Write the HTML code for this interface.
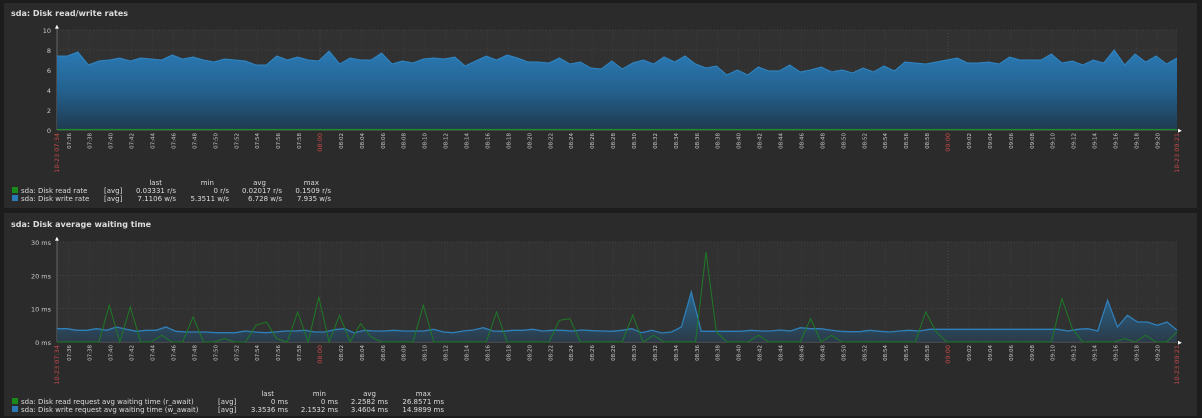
<!DOCTYPE html>
<html><head><meta charset="utf-8"><style>
html,body{margin:0;padding:0;background:#1c1c1c;width:1202px;height:418px;overflow:hidden;font-family:"DejaVu Sans","Liberation Sans",sans-serif;}
.p{position:absolute;left:4px;width:1193px;background:#2b2b2b;}
svg{position:absolute;left:0;top:0;}
</style></head><body>
<div class="p" style="top:3px;height:205px"></div>
<div class="p" style="top:213px;height:203px"></div>
<svg id="s" width="1202" height="418" xmlns="http://www.w3.org/2000/svg" font-family="DejaVu Sans, Liberation Sans, sans-serif">
<defs>
<linearGradient id="g1" x1="0" y1="0" x2="0" y2="1"><stop offset="0" stop-color="#2a7ab5"/><stop offset="0.5" stop-color="#24628f"/><stop offset="1" stop-color="#1f3a4f"/></linearGradient>
<linearGradient id="g2" x1="0" y1="0" x2="0" y2="1"><stop offset="0" stop-color="#2a6f9e"/><stop offset="1" stop-color="#2a3d4d"/></linearGradient>
</defs>
<text x="11" y="16" font-size="8" font-weight="bold" fill="#ddd">sda: Disk read/write rates</text>
<text x="11" y="227" font-size="8" font-weight="bold" fill="#ddd">sda: Disk average waiting time</text>
</svg>
<script>
var s=document.getElementById('s'),NS='http://www.w3.org/2000/svg';
function el(t,a,txt){var e=document.createElementNS(NS,t);for(var k in a)e.setAttribute(k,a[k]);if(txt!=null)e.textContent=txt;s.appendChild(e);return e;}
var X0=57,X1=1177;
function tx(m){return 320+(m-480)*10.467;}
function plot(top,bot,ylabels){
 el('rect',{x:X0,y:top,width:X1-X0,height:bot-top,fill:'#313131'});
 for(var i=0;i<ylabels.length;i++){var y=top+(bot-top)*i/(ylabels.length-1);
  if(i<ylabels.length-1)el('line',{x1:X0,x2:X1,y1:y,y2:y,stroke:'#444','stroke-dasharray':'1,2'});
  el('text',{x:51,y:y+3,'font-size':'6.5',fill:'#ccc','text-anchor':'end'},ylabels[ylabels.length-1-i]);}
 for(var m=456;m<=560;m+=2){var x=tx(m);
  el('line',{x1:x,x2:x,y1:top,y2:bot,stroke:(m%60==0)?'#4a4a4a':'#3d3d3d','stroke-dasharray':'1,2'});
  var h=Math.floor(m/60),mi=m%60,lab=(h<10?'0':'')+h+':'+(mi<10?'0':'')+mi;
  var red=(mi==0);
  el('text',{x:0,y:0,'font-size':red?'6.5':'5.5',fill:red?'#c04848':'#ccc','text-anchor':'end',transform:'translate('+(x+2)+','+(bot+3)+') rotate(-90)'},lab);}
 el('text',{x:0,y:0,'font-size':'6.5',fill:'#c04848','text-anchor':'end',transform:'translate('+(X0+2)+','+(bot+3)+') rotate(-90)'},'10-23 07:34');
 el('text',{x:0,y:0,'font-size':'6.5',fill:'#c04848','text-anchor':'end',transform:'translate('+(X1+2)+','+(bot+3)+') rotate(-90)'},'10-23 09:21');
 el('line',{x1:X0,x2:X1,y1:bot,y2:bot,stroke:'#666'});
 el('line',{x1:X0,x2:X0,y1:top-3,y2:bot,stroke:'#666'});
 el('text',{x:X0-2,y:top-2,'font-size':'5',fill:'#fff'},'▲');
 el('text',{x:X1+1,y:bot+2,'font-size':'5',fill:'#fff'},'▶');
}
function pts(vals,top,bot,max){var n=vals.length,r=[];for(var i=0;i<n;i++){r.push((X0+(X1-X0)*i/(n-1)).toFixed(1)+','+(bot-(bot-top)*vals[i]/max).toFixed(1));}return r;}
plot(30,130,['0','2','4','6','8','10']);
var w=[7.4,7.4,7.8,6.5,6.9,7.0,7.2,6.9,7.2,7.1,7.0,7.5,7.1,7.3,7.0,6.8,7.1,7.0,6.9,6.5,6.5,7.4,7.0,7.3,7.0,6.9,7.9,6.6,7.2,7.0,7.0,7.7,6.6,6.9,6.7,7.1,7.2,7.1,7.3,6.4,6.9,7.4,7.0,7.5,7.2,6.8,6.8,6.7,7.2,6.6,6.8,6.2,6.1,6.9,6.1,6.7,7.0,6.6,7.3,6.8,7.4,6.6,6.2,6.4,5.5,6.0,5.5,6.3,5.9,5.9,6.5,5.8,6.0,6.3,5.8,6.0,5.7,6.2,5.8,6.4,5.9,6.8,6.7,6.6,6.8,7.0,7.2,6.7,6.7,6.8,6.6,7.3,7.0,7.0,7.0,7.6,6.7,6.9,6.5,7.0,6.7,8.0,6.5,7.6,6.8,7.4,6.6,7.2];
var p=pts(w,30,130,10);
el('polygon',{points:X0+',130 '+p.join(' ')+' '+X1+',130',fill:'url(#g1)'});
el('polyline',{points:p.join(' '),fill:'none',stroke:'#2f86c4','stroke-width':'1'});
el('line',{x1:X0,x2:X1,y1:129.5,y2:129.5,stroke:'#1f8a2a','stroke-width':'1.2'});
plot(242,342,['0 ms','10 ms','20 ms','30 ms']);
var bw=[4,4,3.5,3.5,4,3.5,4.5,3.8,3.2,3.5,3.5,4.5,3.2,3,3,3,2.8,2.8,2.8,3.3,3,2.8,3,3.3,3.3,3.5,3,3,3.7,4,2.7,3.5,3.3,3.3,3.5,3.3,3.3,3.3,3.8,3,2.8,3.3,3.6,4.3,3.3,3.2,3.5,3.5,3.8,3.3,3.5,3.5,3.3,3.6,3.4,3.3,3.2,3.5,4,2.8,3.5,2.7,3,4.5,15,3.2,3.2,3.2,3.2,3.2,3.5,3.3,3.3,3.6,3.3,4.3,4,4,3.6,3.2,3.1,3.1,3.5,3.2,3.0,3.3,3.5,3.3,3.8,3.8,3.8,3.8,3.8,3.8,3.8,3.8,3.8,3.8,3.8,3.8,3.8,3.8,3.3,3.8,4,3.3,12.5,4.5,8,6,6,5,6,3.5];
var bp=pts(bw,242,342,30);
el('polygon',{points:X0+',342 '+bp.join(' ')+' '+X1+',342',fill:'url(#g2)','fill-opacity':'0.85'});
el('polyline',{points:bp.join(' '),fill:'none',stroke:'#2f7fb8','stroke-width':'1.3'});
var sp={5:11,7:10.5,10:2,13:7.5,16:1,19:5,20:6,21:1,23:9,25:13.5,26:0,27:8,29:5.5,30:1.5,35:11,42:9,48:6.5,49:7,55:8,57:2,62:27,63:3,67:2,72:7,74:2,83:9,84:3,96:13,97:4,102:1,104:2,107:3};
var gv=[];for(var i=0;i<108;i++){gv.push(sp[i]!=null?sp[i]:0);}
var gp=pts(gv,242,342,30);
el('polyline',{points:gp.join(' '),fill:'none',stroke:'#1d7a26','stroke-width':'1'});
function legend(y0,rows,cols){
 var hx=cols.hdr;
 ['last','min','avg','max'].forEach(function(h,i){el('text',{x:hx[i],y:y0,'font-size':'7',fill:'#ddd','text-anchor':'end'},h);});
 rows.forEach(function(r,j){var y=y0+8*(j+1);
  el('rect',{x:12,y:y-6,width:6,height:6,fill:r.c});
  el('text',{x:21,y:y,'font-size':'7',fill:'#ddd'},r.n);
  el('text',{x:cols.avg,y:y,'font-size':'7',fill:'#ddd'},'[avg]');
  r.v.forEach(function(v,i){el('text',{x:cols.v[i],y:y,'font-size':'7',fill:'#ddd','text-anchor':'end'},v);});});
}
legend(185,[{c:'#1a8a1a',n:'sda: Disk read rate',v:['0.03331 r/s','0 r/s','0.02017 r/s','0.1509 r/s']},{c:'#2a7ab5',n:'sda: Disk write rate',v:['7.1106 w/s','5.3511 w/s','6.728 w/s','7.935 w/s']}],{hdr:[162,214,266,319],avg:104,v:[176,229,282,331]});
legend(396,[{c:'#1a8a1a',n:'sda: Disk read request avg waiting time (r_await)',v:['0 ms','0 ms','2.2582 ms','26.8571 ms']},{c:'#2a7ab5',n:'sda: Disk write request avg waiting time (w_await)',v:['3.3536 ms','2.1532 ms','3.4604 ms','14.9899 ms']}],{hdr:[274,326,376,431],avg:218,v:[288,338,388,444]});
</script>
</body></html>
